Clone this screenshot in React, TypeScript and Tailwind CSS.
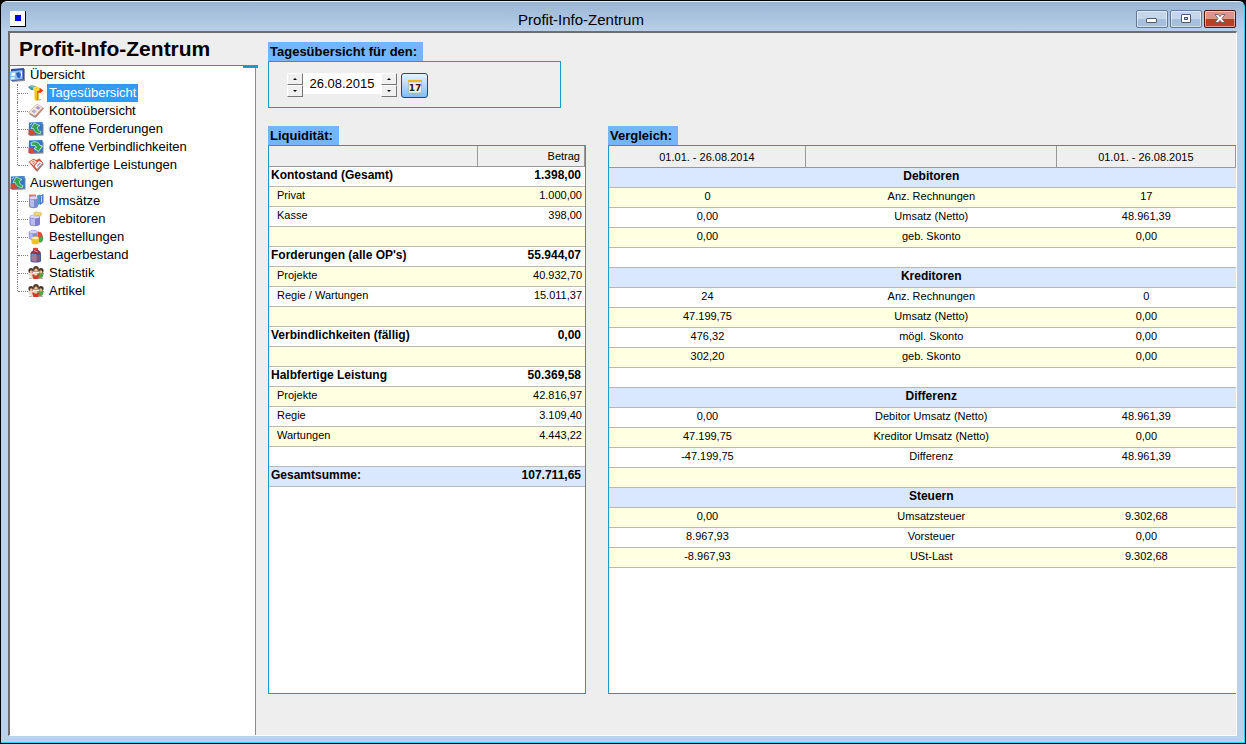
import React, { useState } from 'react';

interface TreeEntry {
  label: string;
  icon: React.ReactNode;
}

interface TreeGroup extends TreeEntry {
  children: TreeEntry[];
}

function Icon({ children }: { children: React.ReactNode }) {
  return (
    <svg className="h-4 w-4 shrink-0" viewBox="0 0 16 16" aria-hidden="true">
      {children}
    </svg>
  );
}

const OverviewIcon = (
  <Icon>
    <path d="M2 3 15 2v12L2 15z" fill="#8a8f99" />
    <path d="M1 2 14 1v11.500L1 14z" fill="#2c4c9c" />
    <path d="M0 4.500 12.500 3v9L0 13.500z" fill="#8fc0f4" />
    <path d="M1.500 6 5 5.500v3l-3.500.5z" fill="#fff" />
    <path d="M6 6l3-1 2 2.500-1.500 4L7 10z" fill="#2f62c0" />
    <path d="M1 10.500 4.500 10v2l-3.500.4z" fill="#e8f4ff" />
    <path d="M11.500 4.500v5" stroke="#e8f4ff" />
  </Icon>
);

const SignpostIcon = (
  <Icon>
    <path d="M8 15.500h4.500l1-1-2-.5z" fill="#b9b9b9" />
    <path d="M6.500 3h4v11.500l-2 1.300-2-1z" fill="#f4c20d" />
    <path d="M9 3h1.500v11.500L9 15.500z" fill="#c98f00" />
    <path d="M0 2 3 .3 8 1v4.500L3 5z" fill="#3f93a8" />
    <path d="M1.500 2 3 1l4.500.8v1z" fill="#86cbd8" />
    <path d="M9.500 3.500 12 3l3.500 2.500L12.500 8l-3-.5z" fill="#e2401f" />
    <path d="M5 2.500 8 1l3.500 1.500v3L8 6.500 5 5.300z" fill="#ffd83a" />
  </Icon>
);

const AccountIcon = (
  <Icon>
    <path d="M1 11 9.500 2 16 5.500 7.500 15z" fill="#8f8380" />
    <path d="M.5 9.500 9 1l6 3.500L7 13z" fill="#f9e9da" stroke="#c2a390" strokeWidth=".6" />
    <path d="M3.500 8.500 5.500 6.500l3 1.500-2 2.500z" fill="#b3a9dc" />
    <path d="M7.500 5l2-2 3 1.700-2 2z" fill="#9f98d2" />
    <path d="M7 13l8-8.500v1.200L7.500 14z" fill="#d98c6c" />
  </Icon>
);

const ReceivableIcon = (
  <Icon>
    <path d="M2 2.500 15.500 3v11.500L1.500 15z" fill="#7e8590" />
    <path d="M1 1.500 14.500 1v12L.5 14z" fill="#3577c4" />
    <path d="M.8 8 5 9 8 13.600.5 14z" fill="#d34a38" />
    <path d="M9 1.200 14.500 1v3z" fill="#4a8ad6" />
    <path d="M12.500 12.500C8 12.500 6 10.500 5.500 7.500H3L6 2l6 2.500-2.500 1.500c0 3 1 4 3.500 4.500z" fill="#2fa84a" stroke="#d9f5dd" strokeWidth=".7" />
    <path d="M2 4l2-1.500" stroke="#cfe5ff" />
  </Icon>
);

const PayableIcon = (
  <Icon>
    <path d="M2 2.500 15.500 3v11.500L1.500 15z" fill="#7e8590" />
    <path d="M1 1.500 14.500 1v12L.5 14z" fill="#3577c4" />
    <path d="M.8 9 5 9.500 7 13.700.5 14z" fill="#d34a38" />
    <path d="M3 4C7 1.500 11 3 12 6.500L14.500 7l-4 5.500-4.500-3L8.500 8.500C8 6.500 6.500 6 3.500 6.500z" fill="#2fa84a" stroke="#e6faea" strokeWidth=".8" />
  </Icon>
);

const ServiceIcon = (
  <Icon>
    <path d="M4 8 12 4l4 3-7 8z" fill="#96817b" />
    <path d="M.5 5 5.500 1.500 8 3l3.500-1.500L15 5.500 8 13.500z" fill="#cf5642" />
    <path d="M1.500 5 5.500 2.500 9 5 5.500 8.500z" fill="#f8dccb" />
    <path d="M6.500 9 11 4l3.500 2L9 12z" fill="#fff" />
    <path d="M8.500 8.500l3-3 1.500 1-3.500 3.500z" fill="#a9a6d9" />
    <path d="M4 5 6 4M5 6.500l2-1" stroke="#d2654b" strokeWidth=".8" />
  </Icon>
);

const SalesIcon = (
  <Icon>
    <path d="M9 2.500l3-1v9l-3 3z" fill="#3fa0b8" />
    <path d="M12 2.500 15.500 1v8.500L12 12z" fill="#4a78cc" />
    <path d="M13.500 3v6.500" stroke="#b6e4ff" />
    <path d="M1 1.500h7v3H1z" fill="#e07a68" />
    <path d="M1 5c0-2.500 9-2.500 9 0v8c0 3-9 3-9 0z" fill="#8484d2" />
    <path d="M2 6c1.500 1 3 1 4 1v7c-2 0-4-.5-4-1.500z" fill="#b9b9f2" />
    <ellipse cx="5.500" cy="4.700" rx="4" ry="1.500" fill="#d8d8fa" />
  </Icon>
);

const DebtorIcon = (
  <Icon>
    <path d="M1.500 6c0-3 10.500-3 10.500 0v7c0 3-10.500 3-10.500 0z" fill="#7f7fce" />
    <path d="M2.500 7c1.500 1 3.500 1 4.500 1v6.500c-2 0-4.500-.5-4.500-1.500z" fill="#b9b9f2" />
    <ellipse cx="6.800" cy="5.700" rx="4.700" ry="1.700" fill="#d8d8fa" />
    <path d="M6 3c0-2.500 3-2.500 4-1 1.500-1.500 4-.5 3.500 1.500-.5 2-2 2-3.500 1-1.500 1-3.500.5-4-1.500z" fill="#f0d870" stroke="#b8962c" strokeWidth=".5" />
  </Icon>
);

const OrderIcon = (
  <Icon>
    <path d="M.8 3c0-2.500 9-2.500 9 0v6c0 2.500-9 2.500-9 0z" fill="#8b8bd6" />
    <path d="M1.500 4c1 .8 2 1 3 1v5c-1.500 0-3-.5-3-1z" fill="#b9b9f2" />
    <ellipse cx="5.200" cy="3" rx="3.800" ry="1.300" fill="#d8d8fa" />
    <path d="M10 2.500l3.500 1L15 7.500 13 10l-3-1z" fill="#e2503c" />
    <path d="M10.500 8 15 7.500c.8 3 0 5-2 6h-2.500z" fill="#45a852" />
    <path d="M3.500 9c0-2 7.500-2 7.500 0v4.500c0 2.500-7.500 2.500-7.500 0z" fill="#efc12c" />
    <ellipse cx="7.200" cy="9" rx="3.200" ry="1.200" fill="#fff2a8" />
  </Icon>
);

const StockIcon = (
  <Icon>
    <path d="M2.500 6h10.500v8c0 2-10.500 2-10.500 0z" fill="#3f5f9a" />
    <path d="M3.500 6.500h5v8c-3 0-5-.3-5-1.500z" fill="#7799cf" />
    <path d="M4 9h8M4 11h8M4 13h8" stroke="#d05a55" strokeWidth=".9" />
    <path d="M2.500 6.500C3 4 5 4 5.500 2.500 5.500 0 9.500 0 9.500 2.500c1.500 1 3 1.500 3.500 4-3 1-8 1-10.500 0z" fill="#8c3a4a" />
    <path d="M5 1h5v2H5z" fill="#e2402f" />
    <path d="M6 3.500 9.500 5" stroke="#ff8c78" />
  </Icon>
);

const PeopleIcon = (
  <Icon>
    <path d="M1 13.500h14" stroke="#b0b0b0" />
    <path d="M0 7.500h5l3 5-4 1.500-3-3z" fill="#e4dfce" />
    <path d="M9 8h7l-1.500 4.500-4 1z" fill="#57a447" />
    <path d="M4 9.500h7.500l-1.500 4.500H5.500z" fill="#cf3b28" />
    <circle cx="3" cy="5.500" r="2.600" fill="#4b3629" />
    <circle cx="8" cy="4" r="2.900" fill="#5a3c28" />
    <circle cx="13" cy="5.500" r="2.600" fill="#4b3629" />
    <circle cx="3.300" cy="6.800" r="1.500" fill="#edb98f" />
    <circle cx="8" cy="5.200" r="1.600" fill="#f2c39b" />
    <circle cx="12.700" cy="6.800" r="1.500" fill="#edb98f" />
    <circle cx="7.700" cy="9" r="1.700" fill="#f4d0ad" />
  </Icon>
);

const tree: TreeGroup[] = [
  {
    label: 'Übersicht',
    icon: OverviewIcon,
    children: [
      { label: 'Tagesübersicht', icon: SignpostIcon },
      { label: 'Kontoübersicht', icon: AccountIcon },
      { label: 'offene Forderungen', icon: ReceivableIcon },
      { label: 'offene Verbindlichkeiten', icon: PayableIcon },
      { label: 'halbfertige Leistungen', icon: ServiceIcon },
    ],
  },
  {
    label: 'Auswertungen',
    icon: ReceivableIcon,
    children: [
      { label: 'Umsätze', icon: SalesIcon },
      { label: 'Debitoren', icon: DebtorIcon },
      { label: 'Bestellungen', icon: OrderIcon },
      { label: 'Lagerbestand', icon: StockIcon },
      { label: 'Statistik', icon: PeopleIcon },
      { label: 'Artikel', icon: PeopleIcon },
    ],
  },
];

interface LiquidityRow {
  label: string;
  amount: string;
  kind: 'head' | 'item' | 'empty' | 'total';
}

const emptyLiquidity: LiquidityRow = { label: '', amount: '', kind: 'empty' };

const liquidity: LiquidityRow[] = [
  { label: 'Kontostand (Gesamt)', amount: '1.398,00', kind: 'head' },
  { label: 'Privat', amount: '1.000,00', kind: 'item' },
  { label: 'Kasse', amount: '398,00', kind: 'item' },
  emptyLiquidity,
  { label: "Forderungen (alle OP's)", amount: '55.944,07', kind: 'head' },
  { label: 'Projekte', amount: '40.932,70', kind: 'item' },
  { label: 'Regie / Wartungen', amount: '15.011,37', kind: 'item' },
  emptyLiquidity,
  { label: 'Verbindlichkeiten (fällig)', amount: '0,00', kind: 'head' },
  emptyLiquidity,
  { label: 'Halbfertige Leistung', amount: '50.369,58', kind: 'head' },
  { label: 'Projekte', amount: '42.816,97', kind: 'item' },
  { label: 'Regie', amount: '3.109,40', kind: 'item' },
  { label: 'Wartungen', amount: '4.443,22', kind: 'item' },
  emptyLiquidity,
  { label: 'Gesamtsumme:', amount: '107.711,65', kind: 'total' },
];

// [previous year, label, current year]; a single entry is a section heading
const comparison: string[][] = [
  ['Debitoren'],
  ['0', 'Anz. Rechnungen', '17'],
  ['0,00', 'Umsatz (Netto)', '48.961,39'],
  ['0,00', 'geb. Skonto', '0,00'],
  ['', '', ''],
  ['Kreditoren'],
  ['24', 'Anz. Rechnungen', '0'],
  ['47.199,75', 'Umsatz (Netto)', '0,00'],
  ['476,32', 'mögl. Skonto', '0,00'],
  ['302,20', 'geb. Skonto', '0,00'],
  ['', '', ''],
  ['Differenz'],
  ['0,00', 'Debitor Umsatz (Netto)', '48.961,39'],
  ['47.199,75', 'Kreditor Umsatz (Netto)', '0,00'],
  ['-47.199,75', 'Differenz', '48.961,39'],
  ['', '', ''],
  ['Steuern'],
  ['0,00', 'Umsatzsteuer', '9.302,68'],
  ['8.967,93', 'Vorsteuer', '0,00'],
  ['-8.967,93', 'USt-Last', '9.302,68'],
];

function stripe(index: number) {
  return index % 2 === 1 ? 'bg-[#ffffe1]' : 'bg-white';
}

function TitleBar() {
  const button =
    'flex h-[18px] w-8 items-center justify-center rounded-[2px] border shadow-[inset_0_0_0_1px_rgba(255,255,255,0.5)]';
  const blue = 'border-[#5f7a9b] bg-linear-to-b from-[#c3d6ec] from-50% to-[#a5bfdd] to-50%';

  return (
    <header className="flex h-[29px] items-center pr-px pl-[2px]">
      <div className="mt-1 flex h-4 w-4 items-center justify-center border-r border-b border-black bg-white">
        <div className="h-[6px] w-[6px] bg-[#0000f0]" />
      </div>
      <div className="mt-[6px] flex-1 text-center text-[15px] leading-5">Profit-Info-Zentrum</div>
      <div className="mt-1 flex gap-[2px]">
        <button type="button" aria-label="Minimieren" className={`${button} ${blue}`}>
          <svg className="h-3 w-3" viewBox="0 0 12 12">
            <rect x=".5" y="5.500" width="10" height="4" rx=".5" fill="#fff" stroke="#535666" />
          </svg>
        </button>
        <button type="button" aria-label="Maximieren" className={`${button} ${blue}`}>
          <svg className="h-3 w-3" viewBox="0 0 12 12">
            <rect x="1.500" y="1.500" width="9" height="8" rx=".5" fill="#fff" stroke="#535666" />
            <rect x="4.500" y="4.500" width="3" height="2" fill="#b5cbe4" stroke="#535666" />
          </svg>
        </button>
        <button
          type="button"
          aria-label="Schließen"
          className={`${button} border-[#4b1512] bg-linear-to-b from-[#dd9485] from-50% to-[#bd3c24] to-50%`}
        >
          <svg className="h-3 w-3" viewBox="0 0 12 12">
            <path
              d="M1 1.500h3.200L6 3.700l1.800-2.200H11L7.900 5.500 11 9.500H7.800L6 7.400 4.200 9.500H1l3.100-4z"
              fill="#fff"
              stroke="#535666"
              strokeWidth=".8"
            />
          </svg>
        </button>
      </div>
    </header>
  );
}

function Sidebar() {
  const [selected, setSelected] = useState('Tagesübersicht');

  return (
    <aside className="flex w-[248px] shrink-0 flex-col">
      <h1 className="h-8 pl-[9px] text-[21px] leading-8 font-bold">Profit-Info-Zentrum</h1>
      <div className="relative flex justify-end border-t border-[#1b9bc8]">
        <div className="h-[2px] w-[15px] bg-[#1b9bc8]" />
      </div>
      <nav className="-mt-[2px] mr-[2px] flex-1 border-r border-[#8c8c8c] bg-white text-[13px]">
        <ul>
          {tree.map(group => (
            <li key={group.label}>
              <div className="flex h-[18px] items-center gap-1">
                {group.icon}
                <span className="leading-[18px]">{group.label}</span>
              </div>
              <ul className="pl-[7px]">
                {group.children.map((entry, index) => (
                  <li key={entry.label} className="flex h-[18px] items-center">
                    <span
                      className={`w-px self-start border-l border-dotted border-[#808080] ${
                        index === group.children.length - 1 ? 'h-[9px]' : 'h-[18px]'
                      }`}
                    />
                    <span className="w-[10px] border-t border-dotted border-[#808080]" />
                    {entry.icon}
                    <button
                      type="button"
                      onClick={() => setSelected(entry.label)}
                      className={`ml-[3px] h-[18px] border border-dotted px-px leading-4 ${
                        selected === entry.label
                          ? 'border-[#cc6600] bg-[#3399ff] text-white'
                          : 'border-transparent'
                      }`}
                    >
                      {entry.label}
                    </button>
                  </li>
                ))}
              </ul>
            </li>
          ))}
        </ul>
      </nav>
    </aside>
  );
}

function Spinner({ name }: { name: string }) {
  const button =
    'flex h-3 w-4 items-center justify-center border border-t-white border-r-[#777] border-b-[#777] border-l-white bg-[#f0f0f0]';

  return (
    <div className="flex flex-col">
      <button type="button" aria-label={`${name} vor`} className={button}>
        <svg className="h-[2px] w-[4px]" viewBox="0 0 4 2">
          <path d="M0 2 2 0l2 2z" />
        </svg>
      </button>
      <button type="button" aria-label={`${name} zurück`} className={button}>
        <svg className="h-[2px] w-[4px]" viewBox="0 0 4 2">
          <path d="M0 0h4L2 2z" />
        </svg>
      </button>
    </div>
  );
}

function DatePanel() {
  const [date, setDate] = useState('26.08.2015');

  return (
    <section>
      <label
        htmlFor="day"
        className="block h-[19px] w-fit bg-[#73b6ff] pr-[6px] pl-[2px] text-[13px] leading-[19px] font-bold"
      >
        Tagesübersicht für den:
      </label>
      <div className="flex h-[47px] w-[293px] items-start border border-[#1b9bc8] pt-[11px] pl-[18px]">
        <Spinner name="Monat" />
        <input
          id="day"
          value={date}
          onChange={event => setDate(event.target.value)}
          className="h-[21px] w-[78px] bg-white text-center text-[13px] outline-none"
        />
        <Spinner name="Tag" />
        <button
          type="button"
          aria-label="Kalender"
          className="ml-1 flex h-[25px] w-[27px] items-center justify-center rounded-[3px] border border-[#174a86] bg-linear-to-b from-[#e6f2ff] to-[#84baf6]"
        >
          <svg className="mt-px h-4 w-4" viewBox="0 0 16 16">
            <path d="M1.500 4h13v10l-2 1h-11z" fill="#f4f0e4" stroke="#a9a79c" strokeWidth=".6" />
            <rect x="1" y="1" width="14" height="3" fill="#f0b429" />
            <path d="M1 1.500h14" stroke="#ffe28a" />
            <text x="8" y="13" textAnchor="middle" className="font-['DejaVu_Sans'] text-[9px] font-bold" fill="#222">
              17
            </text>
          </svg>
        </button>
      </div>
    </section>
  );
}

function PanelTitle({ children }: { children: React.ReactNode }) {
  return (
    <h2 className="h-[19px] w-fit bg-[#73b6ff] pr-[6px] pl-[2px] text-[13px] leading-[19px] font-bold">
      {children}
    </h2>
  );
}

function LiquidityPanel() {
  return (
    <section className="flex w-[318px] shrink-0 flex-col">
      <PanelTitle>Liquidität:</PanelTitle>
      <div className="flex-1 border border-[#1b9bc8] bg-white">
        <table className="w-full table-fixed border-separate border-spacing-0 text-[11px] leading-4">
          <thead>
            <tr className="h-[21px] bg-[#efefef]">
              <th className="w-[66%] border-r border-b border-[#999] p-0" />
              <th className="border-r border-b border-[#999] p-0 pr-1 text-right font-normal">Betrag</th>
            </tr>
          </thead>
          <tbody>
            {liquidity.map((row, index) => {
              const bold = row.kind === 'head' || row.kind === 'total';
              return (
                <tr key={index} className={`h-5 ${row.kind === 'total' ? 'bg-[#d9e7ff]' : stripe(index)}`}>
                  <td
                    className={`border-b border-[#b8b8b8] p-0 align-top ${
                      bold ? 'pl-[2px] text-[12px] font-bold' : 'pl-2'
                    }`}
                  >
                    {row.label}
                  </td>
                  <td
                    className={`border-b border-[#b8b8b8] p-0 text-right align-top ${
                      bold ? 'pr-1 text-[12px] font-bold' : 'pr-[3px]'
                    }`}
                  >
                    {row.amount}
                  </td>
                </tr>
              );
            })}
          </tbody>
        </table>
      </div>
    </section>
  );
}

function ComparisonPanel() {
  const cell = 'border-b border-[#b8b8b8] p-0 align-top';

  return (
    <section className="flex min-w-0 flex-1 flex-col">
      <PanelTitle>Vergleich:</PanelTitle>
      <div className="flex-1 border border-r-0 border-[#1b9bc8] bg-white">
        <table className="w-full table-fixed border-separate border-spacing-0 text-center text-[11px] leading-4">
          <thead>
            <tr className="h-[22px] bg-[#efefef]">
              <th className="w-[31.4%] border-r border-b border-[#999] p-0 font-normal">01.01. - 26.08.2014</th>
              <th className="w-2/5 border-r border-b border-[#999] p-0" />
              <th className="border-r border-b border-[#999] p-0 font-normal">01.01. - 26.08.2015</th>
            </tr>
          </thead>
          <tbody>
            {comparison.map((row, index) =>
              row.length === 1 ? (
                <tr key={index} className="h-5 bg-[#d9e7ff]">
                  <td className={cell} />
                  <th className={`${cell} text-[12px] font-bold`}>{row[0]}</th>
                  <td className={cell} />
                </tr>
              ) : (
                <tr key={index} className={`h-5 ${stripe(index)}`}>
                  {row.map((value, column) => (
                    <td key={column} className={cell}>
                      {value}
                    </td>
                  ))}
                </tr>
              ),
            )}
          </tbody>
        </table>
      </div>
    </section>
  );
}

export default function App() {
  return (
    <div className="flex min-h-screen bg-black font-['Liberation_Sans',Arial,sans-serif] text-black">
      <div className="m-px flex flex-1 flex-col rounded-t-md border-t border-r border-b border-t-[#e4eefa] border-r-[#2cd3ee] border-b-[#2cd3ee] bg-linear-to-b from-[#9ab5d4] to-[#b9d1ea] to-[30px] px-[7px] pb-[6px]">
        <TitleBar />
        <div className="flex flex-1 border-2 border-t-[#6e6e6e] border-r border-b border-r-white border-b-white border-l-[#6e6e6e] bg-[#eee]">
          <Sidebar />
          <main className="flex min-w-0 flex-1 flex-col pt-[9px] pb-[41px] pl-[10px]">
            <DatePanel />
            <div className="mt-[18px] flex flex-1 gap-[22px]">
              <LiquidityPanel />
              <ComparisonPanel />
            </div>
          </main>
        </div>
      </div>
    </div>
  );
}
